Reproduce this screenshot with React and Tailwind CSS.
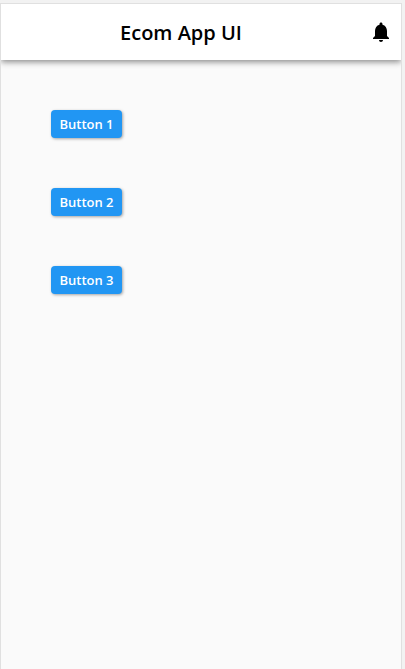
const buttons = ["Button 1", "Button 2", "Button 3"];

function BellIcon() {
  return (
    <svg viewBox="0 0 24 24" className="size-6" fill="currentColor" aria-hidden="true">
      <path d="M12 22c1.1 0 2-.9 2-2h-4c0 1.1.9 2 2 2zm6-6v-5c0-3.07-1.63-5.64-4.5-6.32V4c0-.83-.67-1.5-1.5-1.5s-1.5.67-1.5 1.5v.68C7.64 5.36 6 7.92 6 11v5l-2 2v1h16v-1l-2-2z" />
    </svg>
  );
}

export default function App() {
  return (
    <div className="flex min-h-screen flex-col bg-[#f2f2f2] pt-[3px] pr-[3px] font-['Open_Sans','Noto_Sans',sans-serif]">
      <div className="flex grow flex-col overflow-hidden border-x border-t border-[#e0e0e0] bg-[#fafafa]">
        <header className="flex h-14 items-center bg-white pr-2 text-black shadow-[0_2px_6px_rgba(0,0,0,0.45)]">
          <h1 className="grow pt-0.5 pr-2 text-center text-xl font-semibold">Ecom App UI</h1>
          <button type="button" aria-label="Notifications" className="flex w-6 justify-center">
            <BellIcon />
          </button>
        </header>
        <main className="flex w-[171px] flex-col items-center gap-[50px] py-[50px]">
          {buttons.map((label) => (
            <button
              key={label}
              type="button"
              className="h-7 rounded bg-[#2196f3] px-2 pt-0.5 text-[13px] font-semibold text-white shadow-[1px_1px_3px_rgba(0,0,0,0.35)]"
            >
              {label}
            </button>
          ))}
        </main>
      </div>
    </div>
  );
}
